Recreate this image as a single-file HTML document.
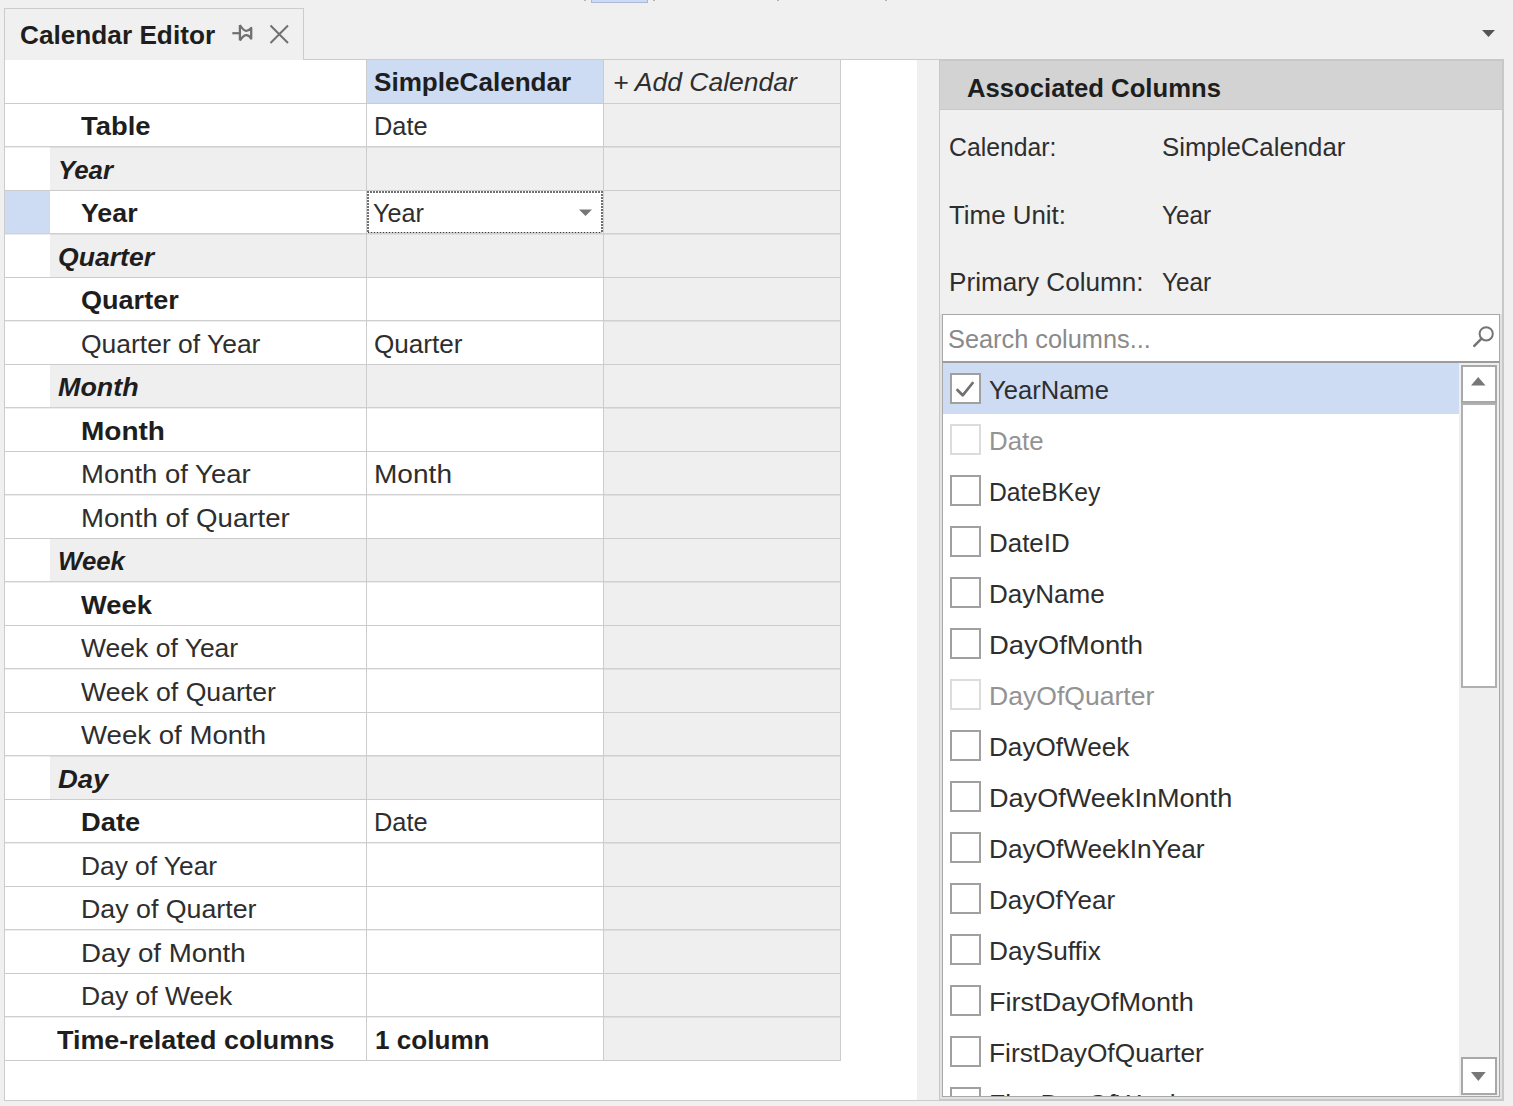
<!DOCTYPE html>
<html><head><meta charset="utf-8"><style>
html,body{margin:0;padding:0;width:1513px;height:1106px;overflow:hidden;background:#f0f0f0;}
body{position:relative;font-family:"Liberation Sans",sans-serif;}
.r{position:absolute;}
.t{position:absolute;white-space:nowrap;line-height:1;transform-origin:0 0;}
</style></head><body>
<div class="r" style="left:4px;top:8px;width:300px;height:52px;border:1px solid #cccccc;border-bottom:none;box-sizing:border-box;background:#f0f0f0"></div>
<div class="t" style="left:19.50px;top:21.99px;font-size:26px;font-weight:bold;font-style:normal;color:#1e1e1e;transform:scaleX(1.0077);">Calendar Editor</div>
<svg class="r" style="left:226px;top:20px" width="70" height="30" viewBox="226 20 70 30">
<path d="M232.3 33.2 H240" stroke="#707070" stroke-width="2.2" fill="none"/>
<path d="M239.9 25 V40.5 M239.9 25 Q 243.5 30.8 246.3 30.8 Q 249 30.8 251.2 28 V38.5 Q 249 35.2 246.3 35.2 Q 243.5 35.2 239.9 40.5" stroke="#707070" stroke-width="2.3" fill="none" stroke-linejoin="round"/>
<path d="M270.5 25.5 L288 43 M288 25.5 L270.5 43" stroke="#707070" stroke-width="2" fill="none"/>
</svg>
<svg class="r" style="left:1480px;top:28px" width="18" height="12" viewBox="1480 28 18 12"><path d="M1482 30 L1495 30 L1488.5 37 Z" fill="#555"/></svg>
<div class="r" style="left:591px;top:-2px;width:57px;height:5px;background:#cddcf4;border:1px solid #a9b9d6;box-sizing:border-box"></div>
<div class="r" style="left:584px;top:0px;width:2px;height:1px;background:#b4b4b4"></div>
<div class="r" style="left:653px;top:0px;width:2px;height:1px;background:#b4b4b4"></div>
<div class="r" style="left:777px;top:0px;width:2px;height:1px;background:#b4b4b4"></div>
<div class="r" style="left:885px;top:0px;width:2px;height:1px;background:#b4b4b4"></div>
<div class="r" style="left:303px;top:59px;width:1201px;height:1px;background:#cccccc"></div>
<div class="r" style="left:4px;top:59px;width:1px;height:1042px;background:#cccccc"></div>
<div class="r" style="left:4px;top:1100px;width:1500px;height:1px;background:#cccccc"></div>
<div class="r" style="left:5px;top:60px;width:912px;height:1040px;background:#fff"></div>
<div class="r" style="left:367px;top:60px;width:236px;height:43px;background:#cddbf3"></div>
<div class="r" style="left:604px;top:60px;width:236px;height:43px;background:#efefef"></div>
<div class="r" style="left:604px;top:104px;width:236px;height:42px;background:#efefef"></div>
<div class="r" style="left:50px;top:147px;width:316px;height:43px;background:#efefef"></div>
<div class="r" style="left:367px;top:147px;width:236px;height:43px;background:#efefef"></div>
<div class="r" style="left:604px;top:147px;width:236px;height:43px;background:#efefef"></div>
<div class="r" style="left:604px;top:191px;width:236px;height:42px;background:#efefef"></div>
<div class="r" style="left:5px;top:191px;width:45px;height:42px;background:#cddbf3"></div>
<div class="r" style="left:50px;top:234px;width:316px;height:43px;background:#efefef"></div>
<div class="r" style="left:367px;top:234px;width:236px;height:43px;background:#efefef"></div>
<div class="r" style="left:604px;top:234px;width:236px;height:43px;background:#efefef"></div>
<div class="r" style="left:604px;top:278px;width:236px;height:42px;background:#efefef"></div>
<div class="r" style="left:604px;top:321px;width:236px;height:43px;background:#efefef"></div>
<div class="r" style="left:50px;top:365px;width:316px;height:42px;background:#efefef"></div>
<div class="r" style="left:367px;top:365px;width:236px;height:42px;background:#efefef"></div>
<div class="r" style="left:604px;top:365px;width:236px;height:42px;background:#efefef"></div>
<div class="r" style="left:604px;top:408px;width:236px;height:43px;background:#efefef"></div>
<div class="r" style="left:604px;top:452px;width:236px;height:42px;background:#efefef"></div>
<div class="r" style="left:604px;top:495px;width:236px;height:43px;background:#efefef"></div>
<div class="r" style="left:50px;top:539px;width:316px;height:42px;background:#efefef"></div>
<div class="r" style="left:367px;top:539px;width:236px;height:42px;background:#efefef"></div>
<div class="r" style="left:604px;top:539px;width:236px;height:42px;background:#efefef"></div>
<div class="r" style="left:604px;top:582px;width:236px;height:43px;background:#efefef"></div>
<div class="r" style="left:604px;top:626px;width:236px;height:42px;background:#efefef"></div>
<div class="r" style="left:604px;top:669px;width:236px;height:43px;background:#efefef"></div>
<div class="r" style="left:604px;top:713px;width:236px;height:42px;background:#efefef"></div>
<div class="r" style="left:50px;top:756px;width:316px;height:43px;background:#efefef"></div>
<div class="r" style="left:367px;top:756px;width:236px;height:43px;background:#efefef"></div>
<div class="r" style="left:604px;top:756px;width:236px;height:43px;background:#efefef"></div>
<div class="r" style="left:604px;top:800px;width:236px;height:42px;background:#efefef"></div>
<div class="r" style="left:604px;top:843px;width:236px;height:43px;background:#efefef"></div>
<div class="r" style="left:604px;top:887px;width:236px;height:42px;background:#efefef"></div>
<div class="r" style="left:604px;top:930px;width:236px;height:43px;background:#efefef"></div>
<div class="r" style="left:604px;top:974px;width:236px;height:42px;background:#efefef"></div>
<div class="r" style="left:604px;top:1017px;width:236px;height:43px;background:#efefef"></div>
<div class="r" style="left:5px;top:103px;width:836px;height:1px;background:#cccccc"></div>
<div class="r" style="left:5px;top:146px;width:836px;height:1px;background:rgba(0,0,0,0.185)"></div>
<div class="r" style="left:5px;top:147px;width:836px;height:1px;background:rgba(0,0,0,0.07)"></div>
<div class="r" style="left:5px;top:190px;width:836px;height:1px;background:#cccccc"></div>
<div class="r" style="left:5px;top:233px;width:836px;height:1px;background:rgba(0,0,0,0.185)"></div>
<div class="r" style="left:5px;top:234px;width:836px;height:1px;background:rgba(0,0,0,0.07)"></div>
<div class="r" style="left:5px;top:277px;width:836px;height:1px;background:#cccccc"></div>
<div class="r" style="left:5px;top:320px;width:836px;height:1px;background:rgba(0,0,0,0.185)"></div>
<div class="r" style="left:5px;top:321px;width:836px;height:1px;background:rgba(0,0,0,0.07)"></div>
<div class="r" style="left:5px;top:364px;width:836px;height:1px;background:#cccccc"></div>
<div class="r" style="left:5px;top:407px;width:836px;height:1px;background:rgba(0,0,0,0.185)"></div>
<div class="r" style="left:5px;top:408px;width:836px;height:1px;background:rgba(0,0,0,0.07)"></div>
<div class="r" style="left:5px;top:451px;width:836px;height:1px;background:#cccccc"></div>
<div class="r" style="left:5px;top:494px;width:836px;height:1px;background:rgba(0,0,0,0.185)"></div>
<div class="r" style="left:5px;top:495px;width:836px;height:1px;background:rgba(0,0,0,0.07)"></div>
<div class="r" style="left:5px;top:538px;width:836px;height:1px;background:#cccccc"></div>
<div class="r" style="left:5px;top:581px;width:836px;height:1px;background:rgba(0,0,0,0.185)"></div>
<div class="r" style="left:5px;top:582px;width:836px;height:1px;background:rgba(0,0,0,0.07)"></div>
<div class="r" style="left:5px;top:625px;width:836px;height:1px;background:#cccccc"></div>
<div class="r" style="left:5px;top:668px;width:836px;height:1px;background:rgba(0,0,0,0.185)"></div>
<div class="r" style="left:5px;top:669px;width:836px;height:1px;background:rgba(0,0,0,0.07)"></div>
<div class="r" style="left:5px;top:712px;width:836px;height:1px;background:#cccccc"></div>
<div class="r" style="left:5px;top:755px;width:836px;height:1px;background:rgba(0,0,0,0.185)"></div>
<div class="r" style="left:5px;top:756px;width:836px;height:1px;background:rgba(0,0,0,0.07)"></div>
<div class="r" style="left:5px;top:799px;width:836px;height:1px;background:#cccccc"></div>
<div class="r" style="left:5px;top:842px;width:836px;height:1px;background:rgba(0,0,0,0.185)"></div>
<div class="r" style="left:5px;top:843px;width:836px;height:1px;background:rgba(0,0,0,0.07)"></div>
<div class="r" style="left:5px;top:886px;width:836px;height:1px;background:#cccccc"></div>
<div class="r" style="left:5px;top:929px;width:836px;height:1px;background:rgba(0,0,0,0.185)"></div>
<div class="r" style="left:5px;top:930px;width:836px;height:1px;background:rgba(0,0,0,0.07)"></div>
<div class="r" style="left:5px;top:973px;width:836px;height:1px;background:#cccccc"></div>
<div class="r" style="left:5px;top:1016px;width:836px;height:1px;background:rgba(0,0,0,0.185)"></div>
<div class="r" style="left:5px;top:1017px;width:836px;height:1px;background:rgba(0,0,0,0.07)"></div>
<div class="r" style="left:5px;top:1060px;width:836px;height:1px;background:#cccccc"></div>
<div class="r" style="left:366px;top:60px;width:1px;height:1001px;background:#cccccc"></div>
<div class="r" style="left:603px;top:60px;width:1px;height:1001px;background:#cccccc"></div>
<div class="r" style="left:840px;top:60px;width:1px;height:1001px;background:#cccccc"></div>
<div class="t" style="left:81.00px;top:113.49px;font-size:26px;font-weight:bold;font-style:normal;color:#1e1e1e;transform:scaleX(1.0530);">Table</div>
<div class="t" style="left:57.80px;top:156.99px;font-size:26px;font-weight:bold;font-style:italic;color:#1e1e1e;transform:scaleX(0.9930);">Year</div>
<div class="t" style="left:80.60px;top:200.49px;font-size:26px;font-weight:bold;font-style:normal;color:#1e1e1e;transform:scaleX(1.0291);">Year</div>
<div class="t" style="left:57.80px;top:243.99px;font-size:26px;font-weight:bold;font-style:italic;color:#1e1e1e;transform:scaleX(1.0229);">Quarter</div>
<div class="t" style="left:81.00px;top:287.49px;font-size:26px;font-weight:bold;font-style:normal;color:#1e1e1e;transform:scaleX(1.0404);">Quarter</div>
<div class="t" style="left:81.40px;top:330.99px;font-size:26px;font-weight:normal;font-style:normal;color:#2e2e2e;transform:scaleX(1.0175);">Quarter of Year</div>
<div class="t" style="left:57.50px;top:374.49px;font-size:26px;font-weight:bold;font-style:italic;color:#1e1e1e;transform:scaleX(1.0346);">Month</div>
<div class="t" style="left:81.00px;top:417.99px;font-size:26px;font-weight:bold;font-style:normal;color:#1e1e1e;transform:scaleX(1.0769);">Month</div>
<div class="t" style="left:81.00px;top:461.49px;font-size:26px;font-weight:normal;font-style:normal;color:#2e2e2e;transform:scaleX(1.0571);">Month of Year</div>
<div class="t" style="left:81.00px;top:504.99px;font-size:26px;font-weight:normal;font-style:normal;color:#2e2e2e;transform:scaleX(1.0619);">Month of Quarter</div>
<div class="t" style="left:57.50px;top:548.49px;font-size:26px;font-weight:bold;font-style:italic;color:#1e1e1e;transform:scaleX(0.9928);">Week</div>
<div class="t" style="left:81.00px;top:591.99px;font-size:26px;font-weight:bold;font-style:normal;color:#1e1e1e;transform:scaleX(1.0500);">Week</div>
<div class="t" style="left:81.00px;top:635.49px;font-size:26px;font-weight:normal;font-style:normal;color:#2e2e2e;transform:scaleX(1.0195);">Week of Year</div>
<div class="t" style="left:81.00px;top:678.99px;font-size:26px;font-weight:normal;font-style:normal;color:#2e2e2e;transform:scaleX(1.0246);">Week of Quarter</div>
<div class="t" style="left:81.00px;top:722.49px;font-size:26px;font-weight:normal;font-style:normal;color:#2e2e2e;transform:scaleX(1.0621);">Week of Month</div>
<div class="t" style="left:57.50px;top:765.99px;font-size:26px;font-weight:bold;font-style:italic;color:#1e1e1e;transform:scaleX(1.0551);">Day</div>
<div class="t" style="left:81.00px;top:809.49px;font-size:26px;font-weight:bold;font-style:normal;color:#1e1e1e;transform:scaleX(1.0500);">Date</div>
<div class="t" style="left:81.00px;top:852.99px;font-size:26px;font-weight:normal;font-style:normal;color:#2e2e2e;transform:scaleX(1.0119);">Day of Year</div>
<div class="t" style="left:81.00px;top:896.49px;font-size:26px;font-weight:normal;font-style:normal;color:#2e2e2e;transform:scaleX(1.0292);">Day of Quarter</div>
<div class="t" style="left:81.00px;top:939.99px;font-size:26px;font-weight:normal;font-style:normal;color:#2e2e2e;transform:scaleX(1.0645);">Day of Month</div>
<div class="t" style="left:81.00px;top:983.49px;font-size:26px;font-weight:normal;font-style:normal;color:#2e2e2e;transform:scaleX(1.0201);">Day of Week</div>
<div class="t" style="left:57.00px;top:1026.99px;font-size:26px;font-weight:bold;font-style:normal;color:#1e1e1e;transform:scaleX(1.0347);">Time-related columns</div>
<div class="t" style="left:374.00px;top:69.49px;font-size:26px;font-weight:bold;font-style:normal;color:#1e1e1e;transform:scaleX(1.0036);">SimpleCalendar</div>
<div class="t" style="left:612.90px;top:69.49px;font-size:26px;font-weight:normal;font-style:italic;color:#2e2e2e;transform:scaleX(1.0187);">+ Add Calendar</div>
<div class="r" style="left:367px;top:191px;width:236px;height:42px;background:#fff"></div>
<div class="r" style="left:367px;top:191px;width:236px;height:2px;background:repeating-linear-gradient(to right,#707070 0 2px,transparent 2px 3px)"></div>
<div class="r" style="left:367px;top:191px;width:2px;height:42px;background:repeating-linear-gradient(to bottom,#707070 0 2px,transparent 2px 3px)"></div>
<div class="r" style="left:601px;top:191px;width:2px;height:42px;background:repeating-linear-gradient(to bottom,#707070 0 2px,transparent 2px 3px)"></div>
<div class="r" style="left:368px;top:232px;width:234px;height:1px;background:repeating-linear-gradient(to right,#3a3a3a 0 1px,#c8c8c8 1px 3px)"></div>
<svg class="r" style="left:576px;top:206px" width="20" height="12" viewBox="576 206 20 12"><path d="M579 209.5 L592 209.5 L585.5 216 Z" fill="#777"/></svg>
<div class="t" style="left:374.00px;top:113.49px;font-size:26px;font-weight:normal;font-style:normal;color:#2e2e2e;transform:scaleX(0.9764);">Date</div>
<div class="t" style="left:373.00px;top:200.49px;font-size:26px;font-weight:normal;font-style:normal;color:#2e2e2e;transform:scaleX(0.9679);">Year</div>
<div class="t" style="left:374.00px;top:330.99px;font-size:26px;font-weight:normal;font-style:normal;color:#2e2e2e;transform:scaleX(1.0045);">Quarter</div>
<div class="t" style="left:374.00px;top:461.49px;font-size:26px;font-weight:normal;font-style:normal;color:#2e2e2e;transform:scaleX(1.0792);">Month</div>
<div class="t" style="left:374.00px;top:809.49px;font-size:26px;font-weight:normal;font-style:normal;color:#2e2e2e;transform:scaleX(0.9764);">Date</div>
<div class="t" style="left:375.00px;top:1026.99px;font-size:26px;font-weight:bold;font-style:normal;color:#1e1e1e;transform:scaleX(1.0035);">1 column</div>
<div class="r" style="left:939px;top:59px;width:565px;height:1042px;background:#f0f0f0;border:1px solid #c8c8c8;border-right-width:2px;box-sizing:border-box"></div>
<div class="r" style="left:940px;top:60px;width:562px;height:50px;background:#d3d3d3"></div>
<div class="r" style="left:940px;top:60px;width:562px;height:1px;background:#c8c8c8"></div>
<div class="r" style="left:940px;top:109px;width:562px;height:1px;background:#cacaca"></div>
<div class="r" style="left:940px;top:314px;width:2px;height:783px;background:#e2e2e2"></div>
<div class="r" style="left:1500px;top:314px;width:2px;height:783px;background:#e2e2e2"></div>
<div class="r" style="left:940px;top:1097px;width:562px;height:2px;background:#e2e2e2"></div>
<div class="r" style="left:939px;top:1099px;width:565px;height:1px;background:#c8c8c8"></div>
<div class="t" style="left:966.80px;top:74.69px;font-size:26px;font-weight:bold;font-style:normal;color:#1e1e1e;transform:scaleX(0.9875);">Associated Columns</div>
<div class="t" style="left:949.00px;top:133.99px;font-size:26px;font-weight:normal;font-style:normal;color:#2e2e2e;transform:scaleX(0.9522);">Calendar:</div>
<div class="t" style="left:1162.00px;top:133.99px;font-size:26px;font-weight:normal;font-style:normal;color:#2e2e2e;transform:scaleX(0.9908);">SimpleCalendar</div>
<div class="t" style="left:949.00px;top:201.99px;font-size:26px;font-weight:normal;font-style:normal;color:#2e2e2e;transform:scaleX(0.9957);">Time Unit:</div>
<div class="t" style="left:1162.00px;top:201.99px;font-size:26px;font-weight:normal;font-style:normal;color:#2e2e2e;transform:scaleX(0.9340);">Year</div>
<div class="t" style="left:949.00px;top:268.99px;font-size:26px;font-weight:normal;font-style:normal;color:#2e2e2e;transform:scaleX(1.0052);">Primary Column:</div>
<div class="t" style="left:1162.00px;top:268.99px;font-size:26px;font-weight:normal;font-style:normal;color:#2e2e2e;transform:scaleX(0.9340);">Year</div>
<div class="r" style="left:942px;top:314px;width:558px;height:48px;background:#fff;border:1px solid #a8a8a8;box-sizing:border-box"></div>
<div class="t" style="left:948.30px;top:326.29px;font-size:26px;font-weight:normal;font-style:normal;color:#8a8a8a;transform:scaleX(0.9745);">Search columns...</div>
<svg class="r" style="left:1470px;top:322px" width="28" height="28" viewBox="1470 322 28 28"><circle cx="1486.2" cy="333.8" r="6.6" stroke="#747474" stroke-width="2" fill="none"/><path d="M1481.5 338.6 L1474.3 345.8" stroke="#747474" stroke-width="2.6" fill="none" stroke-linecap="round"/></svg>
<div class="r" style="left:942px;top:361px;width:558px;height:736px;background:#fff;border:1px solid #a8a8a8;border-top:2px solid #9c9c9c;box-sizing:border-box;overflow:hidden"></div>
<div class="r" style="left:943px;top:363px;width:516px;height:51px;background:#cddbf3"></div>
<div class="r" style="left:950px;top:373px;width:31px;height:31px;background:#fff;border:2px solid #a0a0a0;box-sizing:border-box"></div>
<div class="t" style="left:988.80px;top:377.29px;font-size:26px;font-weight:normal;font-style:normal;color:#2e2e2e;transform:scaleX(0.9836);">YearName</div>
<div class="r" style="left:950px;top:424px;width:31px;height:31px;background:#fff;border:2px solid #dcdcdc;box-sizing:border-box"></div>
<div class="t" style="left:988.80px;top:428.29px;font-size:26px;font-weight:normal;font-style:normal;color:#939393;transform:scaleX(0.9927);">Date</div>
<div class="r" style="left:950px;top:475px;width:31px;height:31px;background:#fff;border:2px solid #a0a0a0;box-sizing:border-box"></div>
<div class="t" style="left:988.80px;top:479.29px;font-size:26px;font-weight:normal;font-style:normal;color:#2e2e2e;transform:scaleX(0.9504);">DateBKey</div>
<div class="r" style="left:950px;top:526px;width:31px;height:31px;background:#fff;border:2px solid #a0a0a0;box-sizing:border-box"></div>
<div class="t" style="left:988.80px;top:530.29px;font-size:26px;font-weight:normal;font-style:normal;color:#2e2e2e;transform:scaleX(0.9975);">DateID</div>
<div class="r" style="left:950px;top:577px;width:31px;height:31px;background:#fff;border:2px solid #a0a0a0;box-sizing:border-box"></div>
<div class="t" style="left:988.80px;top:581.29px;font-size:26px;font-weight:normal;font-style:normal;color:#2e2e2e;transform:scaleX(1.0017);">DayName</div>
<div class="r" style="left:950px;top:628px;width:31px;height:31px;background:#fff;border:2px solid #a0a0a0;box-sizing:border-box"></div>
<div class="t" style="left:988.80px;top:632.29px;font-size:26px;font-weight:normal;font-style:normal;color:#2e2e2e;transform:scaleX(1.0555);">DayOfMonth</div>
<div class="r" style="left:950px;top:679px;width:31px;height:31px;background:#fff;border:2px solid #dcdcdc;box-sizing:border-box"></div>
<div class="t" style="left:988.80px;top:683.29px;font-size:26px;font-weight:normal;font-style:normal;color:#939393;transform:scaleX(1.0216);">DayOfQuarter</div>
<div class="r" style="left:950px;top:730px;width:31px;height:31px;background:#fff;border:2px solid #a0a0a0;box-sizing:border-box"></div>
<div class="t" style="left:988.80px;top:734.29px;font-size:26px;font-weight:normal;font-style:normal;color:#2e2e2e;transform:scaleX(1.0043);">DayOfWeek</div>
<div class="r" style="left:950px;top:781px;width:31px;height:31px;background:#fff;border:2px solid #a0a0a0;box-sizing:border-box"></div>
<div class="t" style="left:988.80px;top:785.29px;font-size:26px;font-weight:normal;font-style:normal;color:#2e2e2e;transform:scaleX(1.0410);">DayOfWeekInMonth</div>
<div class="r" style="left:950px;top:832px;width:31px;height:31px;background:#fff;border:2px solid #a0a0a0;box-sizing:border-box"></div>
<div class="t" style="left:988.80px;top:836.29px;font-size:26px;font-weight:normal;font-style:normal;color:#2e2e2e;transform:scaleX(1.0075);">DayOfWeekInYear</div>
<div class="r" style="left:950px;top:883px;width:31px;height:31px;background:#fff;border:2px solid #a0a0a0;box-sizing:border-box"></div>
<div class="t" style="left:988.80px;top:887.29px;font-size:26px;font-weight:normal;font-style:normal;color:#2e2e2e;transform:scaleX(0.9992);">DayOfYear</div>
<div class="r" style="left:950px;top:934px;width:31px;height:31px;background:#fff;border:2px solid #a0a0a0;box-sizing:border-box"></div>
<div class="t" style="left:988.80px;top:938.29px;font-size:26px;font-weight:normal;font-style:normal;color:#2e2e2e;transform:scaleX(1.0090);">DaySuffix</div>
<div class="r" style="left:950px;top:985px;width:31px;height:31px;background:#fff;border:2px solid #a0a0a0;box-sizing:border-box"></div>
<div class="t" style="left:988.80px;top:989.29px;font-size:26px;font-weight:normal;font-style:normal;color:#2e2e2e;transform:scaleX(1.0418);">FirstDayOfMonth</div>
<div class="r" style="left:950px;top:1036px;width:31px;height:31px;background:#fff;border:2px solid #a0a0a0;box-sizing:border-box"></div>
<div class="t" style="left:988.80px;top:1040.29px;font-size:26px;font-weight:normal;font-style:normal;color:#2e2e2e;transform:scaleX(1.0117);">FirstDayOfQuarter</div>
<svg class="r" style="left:950px;top:373px" width="31" height="31" viewBox="950 373 31 31"><path d="M957.4 390 L962.7 395.3 L972.6 383" stroke="#707070" stroke-width="2.7" fill="none" stroke-linecap="round" stroke-linejoin="round"/></svg>
<div class="r" style="left:943px;top:1077px;width:516px;height:19px;overflow:hidden"><div class="r" style="left:7px;top:10px;width:31px;height:31px;border:2px solid #a0a0a0;box-sizing:border-box;background:#fff"></div><div class="t" style="left:45.80px;top:14.29px;font-size:26px;font-weight:normal;font-style:normal;color:#2e2e2e;transform:scaleX(1.0200);">FirstDayOfWeek</div></div>
<div class="r" style="left:1459px;top:363px;width:40px;height:733px;background:#efefef"></div>
<div class="r" style="left:1461px;top:365px;width:36px;height:38px;background:#fff;border:2px solid #a8a8a8;box-sizing:border-box"></div>
<svg class="r" style="left:1468px;top:374px" width="22" height="16" viewBox="1468 374 22 16"><path d="M1471 385.5 L1485.5 385.5 L1478.2 377 Z" fill="#777"/></svg>
<div class="r" style="left:1461px;top:403px;width:36px;height:285px;background:#fff;border:2px solid #b0b0b0;box-sizing:border-box"></div>
<div class="r" style="left:1461px;top:1057px;width:36px;height:38px;background:#fff;border:2px solid #a8a8a8;box-sizing:border-box"></div>
<svg class="r" style="left:1468px;top:1068px" width="22" height="16" viewBox="1468 1068 22 16"><path d="M1471 1072 L1485.7 1072 L1478.3 1081 Z" fill="#777"/></svg>
</body></html>
